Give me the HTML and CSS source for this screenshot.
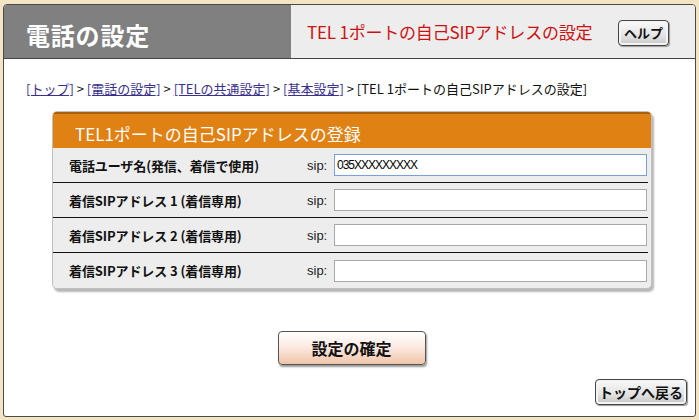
FILE: index.html
```html
<!DOCTYPE html>
<html lang="ja">
<head>
<meta charset="utf-8">
<link rel="stylesheet" href="styles.css">
</head>
<body>
<div class="frame">
  <div class="header">
    <div class="head-left">電話の設定</div>
    <div class="head-right">
      <span class="head-title">TEL 1ポートの自己SIPアドレスの設定</span>
      <span class="btn help">ヘルプ</span>
    </div>
  </div>
  <div class="body">
    <div class="crumbs">
      <a href="#">[トップ]</a> &gt; <a href="#">[電話の設定]</a> &gt; <a href="#">[TELの共通設定]</a> &gt; <a href="#">[基本設定]</a> &gt; [TEL 1ポートの自己SIPアドレスの設定]
    </div>
    <div class="box">
      <div class="box-head">TEL1ポートの自己SIPアドレスの登録</div>
      <div class="row">
        <div class="label">電話ユーザ名(発信、着信で使用)</div>
        <div class="sip">sip:</div>
        <div class="input focus">035XXXXXXXXX</div>
      </div>
      <div class="row">
        <div class="label">着信SIPアドレス 1 (着信専用)</div>
        <div class="sip">sip:</div>
        <div class="input"></div>
      </div>
      <div class="row">
        <div class="label">着信SIPアドレス 2 (着信専用)</div>
        <div class="sip">sip:</div>
        <div class="input"></div>
      </div>
      <div class="row last">
        <div class="label">着信SIPアドレス 3 (着信専用)</div>
        <div class="sip">sip:</div>
        <div class="input"></div>
      </div>
    </div>
    <div class="submit-wrap"><span class="btn submit">設定の確定</span></div>
    <div class="back-wrap"><span class="btn back">トップへ戻る</span></div>
  </div>
</div>
</body>
</html>
```
FILE: styles.css
```css
html, body { margin: 0; padding: 0; }
body {
  width: 699px; height: 420px;
  background: #f3e4c4;
  font-family: "Noto Sans CJK JP", "DejaVu Sans", sans-serif;
  overflow: hidden;
}
.frame {
  margin: 4px 3px 0 3px;
  width: 691px;
  height: 411px;
  border: 1px solid #4a4a4a;
  border-radius: 4px 4px 3px 3px;
  background: #fff;
  overflow: hidden;
  display: flex;
  flex-direction: column;
}
.header {
  display: flex;
  height: 53px;
  border-bottom: 1px solid #444;
  flex: none;
}
.head-left {
  width: 287px;
  background: #808080;
  color: #fff;
  font-weight: bold;
  font-size: 24px;
  padding-left: 22px;
  display: flex;
  align-items: center;
  padding-top: 5px;
  box-sizing: border-box;
  letter-spacing: 0.8px;
}
.head-right {
  flex: 1;
  background: #ededed;
  display: flex;
  align-items: center;
  padding-left: 16px;
}
.head-title {
  color: #cc1111;
  font-size: 17px;
  flex: 1;
  letter-spacing: -0.2px;
}
.btn {
  display: inline-flex;
  align-items: center;
  justify-content: center;
  box-sizing: border-box;
  border: 1px solid #444;
  border-radius: 4px;
  color: #111;
}
.help {
  width: 51px; height: 26px;
  margin-right: 26px;
  margin-top: 2px;
  font-size: 13px;
  font-weight: bold;
  background: linear-gradient(#fafafa, #e4e4e4 60%, #c8c8c8);
  box-shadow: inset 0 0 0 2px #f4f4f4, 1px 1px 1px #999;
}
.body {
  flex: 1;
  position: relative;
}
.crumbs {
  font-size: 13px;
  color: #111;
  padding: 20px 0 0 22px;
  height: 38px;
  box-sizing: border-box;
  letter-spacing: 0;
  white-space: nowrap;
}
.crumbs a { color: #3a2f8c; }
.box {
  margin: 14px 0 0 48px;
  width: 598px;
  background: #ededed;
  border: 1px solid #c0c0c0;
  border-radius: 5px;
  box-shadow: 2px 3px 2px #b8b8b8;
  overflow: hidden;
}
.box-head {
  background: #e08114;
  border-top: 2px solid #a86010;
  color: #fff;
  font-size: 17px;
  height: 36px;
  box-sizing: border-box;
  padding-left: 22px;
  display: flex;
  align-items: center;
  padding-top: 4px;
}
.row {
  display: flex;
  align-items: center;
  height: 34px;
  border-bottom: 1px solid #111;
  margin-right: 3px;
}
.row.last { border-bottom: none; height: 35px; }
.label {
  width: 238px;
  padding-left: 16px;
  font-size: 13px;
  font-weight: bold;
  color: #111;
  letter-spacing: -0.1px;
  white-space: nowrap;
}
.sip {
  width: 27px;
  font-size: 13px;
  color: #222;
  font-family: "Liberation Sans", sans-serif;
}
.input {
  width: 313px;
  height: 22px;
  box-sizing: border-box;
  border: 1px solid #a8a8a8;
  background: #fff;
  font-size: 12px;
  font-family: "Liberation Sans", sans-serif;
  padding-left: 2px;
  display: flex;
  align-items: center;
  letter-spacing: -1px;
}
.input.focus { border-color: #7aa0d8; }
.submit-wrap {
  display: flex;
  justify-content: center;
  margin-top: 42px;
  padding-left: 4px;
}
.submit {
  width: 148px; height: 34px;
  font-size: 16px;
  font-weight: bold;
  background: linear-gradient(#ffffff, #fbe8de 50%, #f0c4a8);
  border-color: #555;
  box-shadow: 1px 2px 2px #999;
}
.back-wrap {
  display: flex;
  justify-content: flex-end;
  margin-top: 14px;
  padding-right: 8px;
}
.back {
  width: 92px; height: 26px;
  font-size: 14px;
  font-weight: bold;
  background: linear-gradient(#fafafa, #e2e2e2 60%, #c4c4c4);
  box-shadow: inset 0 0 0 2px #f4f4f4, 1px 1px 1px #999;
}
```
